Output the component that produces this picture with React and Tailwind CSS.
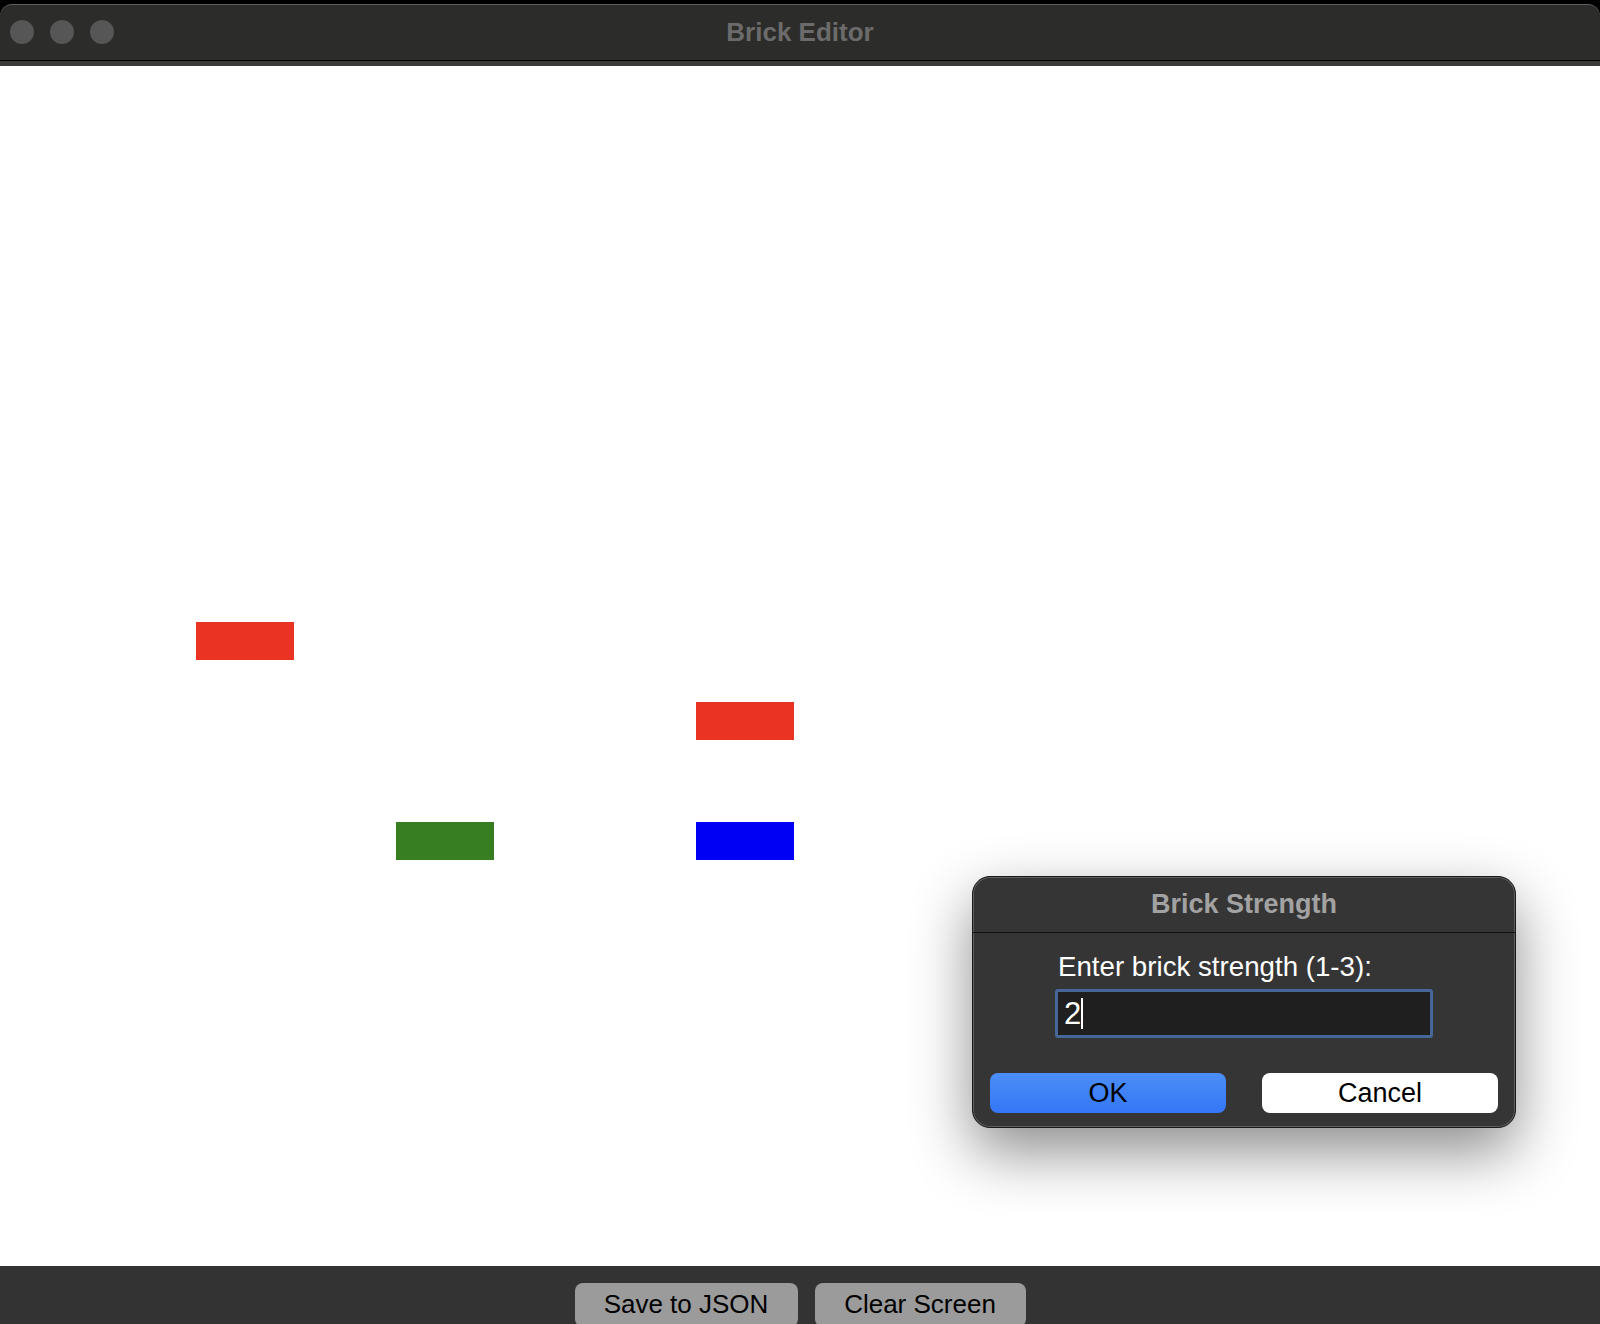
import React from "react";

const bricks = [
  { left: 196, top: 556, color: "bg-[#ea3323]" },
  { left: 696, top: 636, color: "bg-[#ea3323]" },
  { left: 396, top: 756, color: "bg-[#377e22]" },
  { left: 696, top: 756, color: "bg-[#0000f5]" },
];

export default function App() {
  return (
    <div
      className="w-[1600px] h-[1324px] bg-black flex flex-col pt-[4px] overflow-hidden"
      style={{ fontFamily: '"Liberation Sans", Arial, sans-serif' }}
    >
      {/* Title bar */}
      <div className="h-[56px] rounded-t-[12px] bg-[#2c2c2a] border-t border-[#5f5f5d] relative flex items-center justify-center">
        <div className="absolute left-[10px] top-[15px] flex gap-[16px]">
          <div className="w-[24px] h-[24px] rounded-full bg-[#565656]" />
          <div className="w-[24px] h-[24px] rounded-full bg-[#565656]" />
          <div className="w-[24px] h-[24px] rounded-full bg-[#565656]" />
        </div>
        <span className="text-[26px] font-bold text-[#6b6b6b] leading-none -mt-[2px]">
          Brick Editor
        </span>
      </div>
      <div className="h-px bg-black" />
      <div className="h-[5px] bg-[#3a3a3a]" />

      {/* Canvas */}
      <div className="flex-1 bg-white relative">
        {bricks.map((b, i) => (
          <div
            key={i}
            className={`absolute w-[98px] h-[38px] ${b.color}`}
            style={{ left: b.left, top: b.top }}
          />
        ))}

        {/* Dialog */}
        <div className="absolute left-[972px] top-[810px] w-[544px] h-[252px] rounded-[18px] bg-[#353535] border border-[#1a1a1a] shadow-[inset_0_0_0_1px_#5e5e5e,0_24px_60px_rgba(0,0,0,0.45)] flex flex-col overflow-hidden">
          <div className="h-[55px] flex items-center justify-center">
            <span className="text-[27px] font-bold text-[#a2a2a2] leading-none">
              Brick Strength
            </span>
          </div>
          <div className="h-px bg-[#111]" />
          <div className="flex flex-col pl-[85px] pt-[18px]">
            <div className="text-[27.7px] text-white leading-[32px]">
              Enter brick strength (1-3):
            </div>
            <div className="mt-[6px] ml-[-3px] w-[378px] h-[49px] rounded-[3px] border-[3px] border-[#46669a] bg-[#1f1f1f] flex items-center pl-[6px]">
              <span className="text-[31px] text-white leading-none">2</span>
              <span className="w-[2px] h-[31px] bg-white" />
            </div>
          </div>
          <div className="flex gap-[36px] px-[17px] mt-[35px]">
            <div className="w-[236px] h-[40px] rounded-[8px] bg-gradient-to-b from-[#4b8ef6] to-[#3476f6] flex items-center justify-center text-[27px] text-black leading-none">
              OK
            </div>
            <div className="w-[236px] h-[40px] rounded-[8px] bg-white flex items-center justify-center text-[27px] text-black leading-none">
              Cancel
            </div>
          </div>
        </div>
      </div>

      {/* Bottom bar */}
      <div className="h-[58px] bg-[#333333] flex justify-center gap-[17px] pt-[17px]">
        <div className="w-[223px] h-[44px] rounded-[8px] bg-[#9b9b9b] flex justify-center pt-[6px] text-[26px] text-black leading-[30px]">
          Save to JSON
        </div>
        <div className="w-[211px] h-[44px] rounded-[8px] bg-[#9b9b9b] flex justify-center pt-[6px] text-[26px] text-black leading-[30px]">
          Clear Screen
        </div>
      </div>
    </div>
  );
}
